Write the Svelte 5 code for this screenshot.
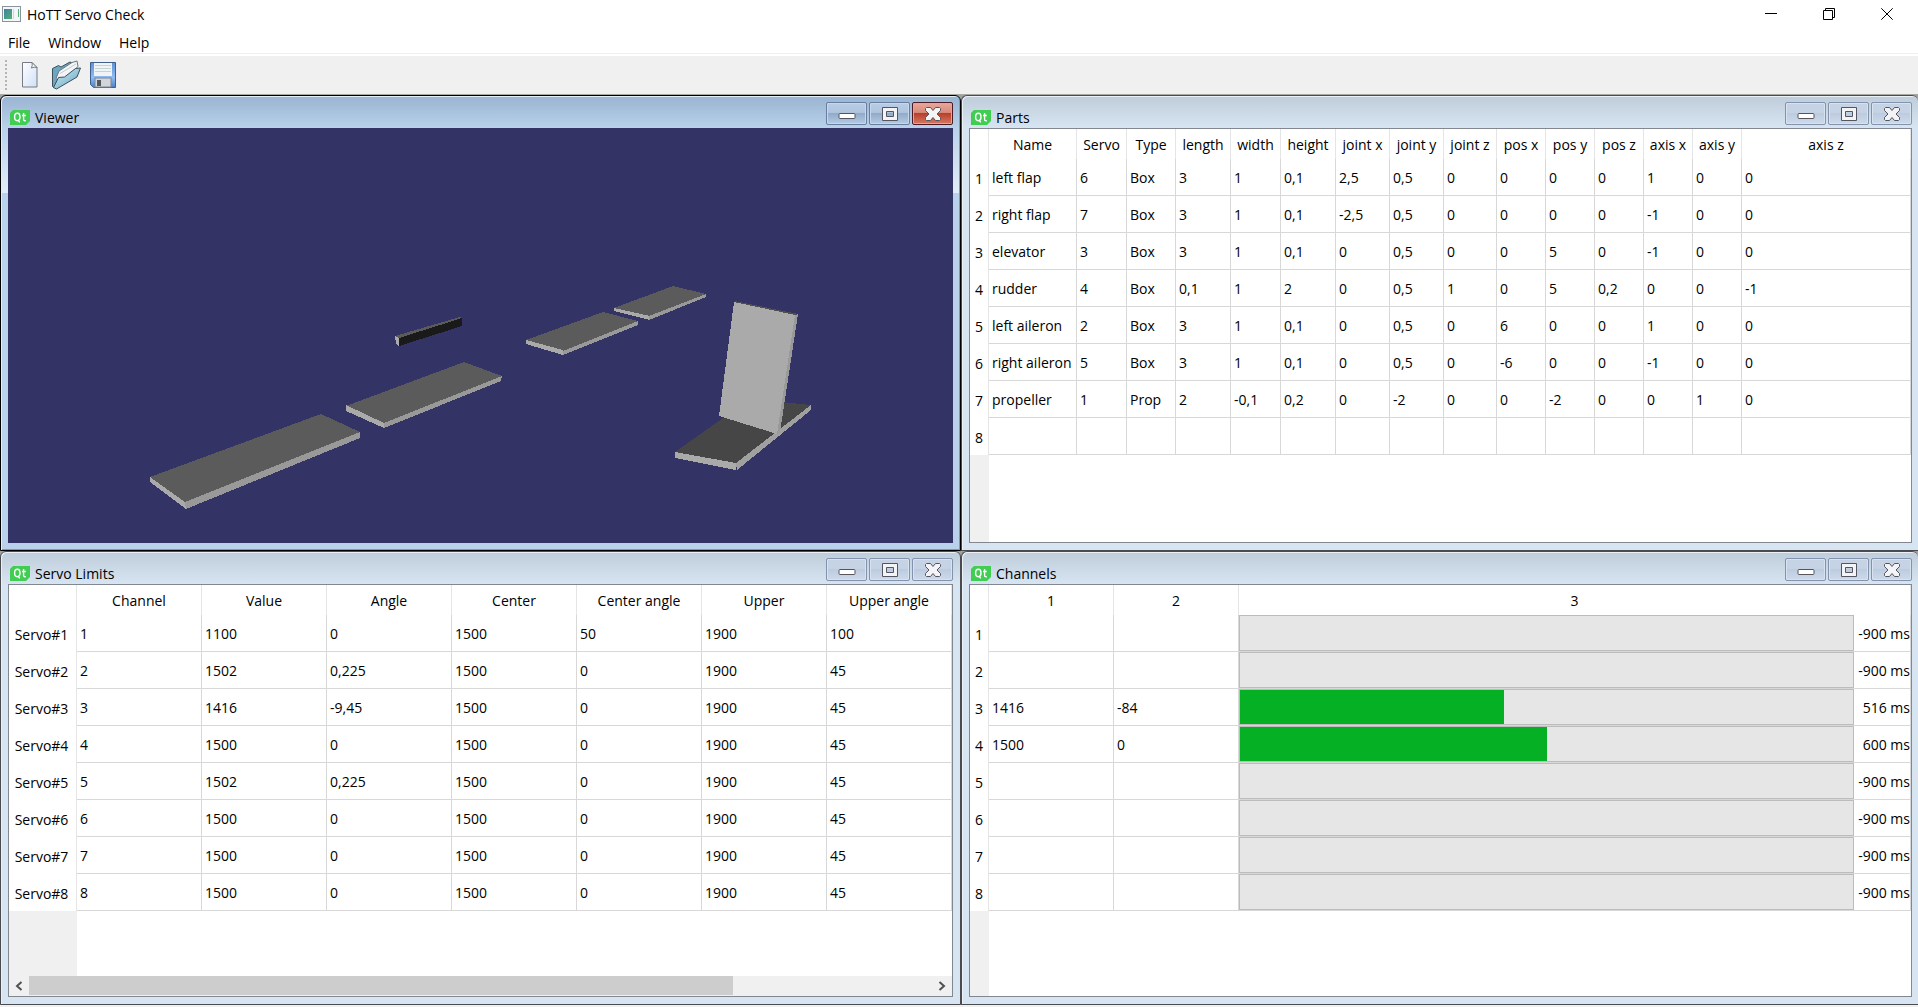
<script>
  const partColumns = [
    ['Name', 88], ['Servo', 50], ['Type', 49], ['length', 55], ['width', 50],
    ['height', 55], ['joint x', 54], ['joint y', 54], ['joint z', 53],
    ['pos x', 49], ['pos y', 49], ['pos z', 49], ['axis x', 49], ['axis y', 49],
    ['axis z', null]
  ];
  const parts = [
    ['left flap', '6', 'Box', '3', '1', '0,1', '2,5', '0,5', '0', '0', '0', '0', '1', '0', '0'],
    ['right flap', '7', 'Box', '3', '1', '0,1', '-2,5', '0,5', '0', '0', '0', '0', '-1', '0', '0'],
    ['elevator', '3', 'Box', '3', '1', '0,1', '0', '0,5', '0', '0', '5', '0', '-1', '0', '0'],
    ['rudder', '4', 'Box', '0,1', '1', '2', '0', '0,5', '1', '0', '5', '0,2', '0', '0', '-1'],
    ['left aileron', '2', 'Box', '3', '1', '0,1', '0', '0,5', '0', '6', '0', '0', '1', '0', '0'],
    ['right aileron', '5', 'Box', '3', '1', '0,1', '0', '0,5', '0', '-6', '0', '0', '-1', '0', '0'],
    ['propeller', '1', 'Prop', '2', '-0,1', '0,2', '0', '-2', '0', '0', '-2', '0', '0', '1', '0'],
    Array(15).fill('')
  ];

  const limitColumns = ['Channel', 'Value', 'Angle', 'Center', 'Center angle', 'Upper', 'Upper angle'];
  const limits = [
    ['1', '1100', '0', '1500', '50', '1900', '100'],
    ['2', '1502', '0,225', '1500', '0', '1900', '45'],
    ['3', '1416', '-9,45', '1500', '0', '1900', '45'],
    ['4', '1500', '0', '1500', '0', '1900', '45'],
    ['5', '1502', '0,225', '1500', '0', '1900', '45'],
    ['6', '1500', '0', '1500', '0', '1900', '45'],
    ['7', '1500', '0', '1500', '0', '1900', '45'],
    ['8', '1500', '0', '1500', '0', '1900', '45']
  ];

  const channels = [
    ['', '', -900], ['', '', -900], ['1416', '-84', 516], ['1500', '0', 600],
    ['', '', -900], ['', '', -900], ['', '', -900], ['', '', -900]
  ];
</script>

{#snippet titlebar(name)}
  <header class="titlebar">
    <h2>
      <svg class="qt" viewBox="0 0 20 15" aria-hidden="true">
        <path d="M3 0H20V11L16 15H0V3Z" fill="#41cd52" />
        <g fill="none" stroke="#fff" stroke-width="1.4">
          <ellipse cx="7.3" cy="7" rx="2.7" ry="3.7" />
          <path d="M8 10l1.8 2.4M13.600 3v6.400q0 1.300 1.300 1.300h.9M12 5.500h3.800" />
        </g>
      </svg>
      <span>{name}</span>
    </h2>
    <div class="winbuttons">
      <button aria-label="Minimize {name}">
        <svg viewBox="0 0 20 16"><rect x="2" y="7.500" width="16" height="5" rx="1" fill="#fff" stroke="#55555f" /></svg>
      </button>
      <button aria-label="Maximize {name}">
        <svg viewBox="0 0 20 16">
          <path fill-rule="evenodd" d="M2.500 1.500h15v13h-15zM6.500 5.500h7v5h-7z" fill="#f4f4f6" stroke="#55555f" />
        </svg>
      </button>
      <button class="close" aria-label="Close {name}">
        <svg viewBox="0 0 20 16">
          <path d="M2.500 2.500l1-1h4L10 4.500l2.500-3h4l1 1v2L14 8l3.500 3.500v2l-1 1h-4L10 11.500l-2.500 3h-4l-1-1v-2L6 8 2.500 4.500z" fill="#f4f4f6" stroke="#55555f" />
        </svg>
      </button>
    </div>
  </header>
{/snippet}

<div class="app">
  <header class="apptitle">
    <svg class="appicon" viewBox="0 0 19 16" aria-hidden="true">
      <defs>
        <linearGradient id="appg" x1="0" y1="0" x2="1" y2="1">
          <stop offset="0" stop-color="#3f7fa8" /><stop offset="1" stop-color="#56b070" />
        </linearGradient>
      </defs>
      <rect x=".5" y=".5" width="18" height="15" fill="#f4f7f9" stroke="#8a949c" />
      <rect x="2" y="3" width="8" height="10" fill="url(#appg)" />
      <path d="M11.500 3v10" stroke="#cfd8de" />
      <rect x="16" y="3" width="1" height="8" fill="#58b07c" />
    </svg>
    <h1>HoTT Servo Check</h1>
    <div class="syscontrols">
      <button aria-label="Minimize"><svg viewBox="0 0 12 12"><path d="M0 5.500h12" /></svg></button>
      <button aria-label="Restore"><svg viewBox="0 0 12 12"><path d="M.5 2.500h9v9h-9zM2.500 2.500v-2h9v9h-2" /></svg></button>
      <button aria-label="Close"><svg viewBox="0 0 12 12"><path d="M.3.3l11.400 11.400M11.700.3L.3 11.700" /></svg></button>
    </div>
  </header>

  <nav class="menubar">
    <button>File</button>
    <button>Window</button>
    <button>Help</button>
  </nav>

  <div class="toolbar" role="toolbar" aria-label="File tools">
    <span class="grip"></span>
    <button aria-label="New">
      <svg viewBox="0 0 30 30">
        <defs>
          <linearGradient id="pg" x1="0" y1="0" x2="1" y2="1">
            <stop offset="0" stop-color="#fff" /><stop offset="1" stop-color="#cfe0f8" />
          </linearGradient>
        </defs>
        <path d="M8.500 2.500h9.500l5 5v19.500h-14.500z" fill="url(#pg)" stroke="#777b85" stroke-linejoin="round" />
        <path d="M18 2.500q.8 3-.6 5.500 2.600-1.400 5.600-.5z" fill="#fff" stroke="#777b85" />
      </svg>
    </button>
    <button aria-label="Open">
      <svg viewBox="0 0 30 30">
        <defs>
          <linearGradient id="fg" x1="0" y1="0" x2="1" y2="1">
            <stop offset="0" stop-color="#d7eef6" /><stop offset="1" stop-color="#5fa3c0" />
          </linearGradient>
        </defs>
        <path d="M1.500 8.500l6-3 2.500 1.500L19 2l3 1.500-17 25-3.500-2z" fill="#6ba7c2" stroke="#3c515c" stroke-linejoin="round" />
        <path d="M5 18.500L8 11 21 2.500l5-1.500 1 5.500L10 23z" fill="#f3f5f7" stroke="#6c777d" stroke-linejoin="round" />
        <path d="M9 13.500L25 4" stroke="#c4ccd0" />
        <path d="M7.500 17.500l6-.5L24.500 8.500l5-.5-3.500 9L5.500 29l-3-1.500z" fill="url(#fg)" stroke="#3c515c" stroke-linejoin="round" />
      </svg>
    </button>
    <button aria-label="Save">
      <svg viewBox="0 0 30 30">
        <defs>
          <linearGradient id="sg" x1="0" y1="0" x2="0" y2="1">
            <stop offset="0" stop-color="#5f91d8" /><stop offset=".6" stop-color="#8fbdf2" /><stop offset="1" stop-color="#4a7fc4" />
          </linearGradient>
        </defs>
        <path d="M2.500 2.500h25v25h-22l-3-3z" fill="url(#sg)" stroke="#3f5f8c" stroke-linejoin="round" />
        <rect x="6" y="3" width="18" height="13" fill="#f1f4f6" />
        <path d="M7 5.500h16M7 8.500h16M7 11.500h16" stroke="#c3d4d2" />
        <rect x="7" y="18" width="16" height="9" fill="#d3d5d8" stroke="#77869a" />
        <rect x="9" y="20" width="4" height="6" fill="#55585c" />
      </svg>
    </button>
  </div>

  <main class="mdi">
    <section class="window active">
      {@render titlebar('Viewer')}
      <div class="scene">
        <svg viewBox="8 128 945 415" preserveAspectRatio="none" role="img" aria-label="Servo model">
          <g fill="#5b5b5b">
            <path d="M150 477L321 414L360 432L185 502z" />
            <path d="M346 406L464 362L502 376L384 423z" />
            <path d="M395 336L460 317L462 319L399 338z" />
            <path d="M526 340L603 312L638 321L563 351z" />
            <path d="M614 308L673 286L706 294L650 316z" />
          </g>
          <g fill="#aaa">
            <path d="M150 477L185 502L186 509L150 482z" />
            <path d="M346 405L384 423V428L346 411z" />
            <path d="M395 336L399 338V346L396 344z" />
            <path d="M526 340L563 350V355L526 344z" />
            <path d="M614 308L650 316V320L614 311z" />
          </g>
          <g fill="#999">
            <path d="M185 502L360 432V438L186 509z" />
            <path d="M384 423L502 376L501 381L384 428z" />
            <path d="M563 351L638 321V325L563 355z" />
            <path d="M649 316L706 294V297L649 320z" />
          </g>
          <path d="M399 338L462 318V326L399 346z" fill="#1a1a1a" />
          <path d="M675 452L750 399L811 405L736 464z" fill="#464646" />
          <path d="M675 452L736 463V470L675 458z" fill="#aaa" />
          <path d="M736 463L811 405V410L737 470z" fill="#a0a0a0" />
          <path d="M734 302L795 315L777 434L719 416z" fill="#aaa" />
          <path d="M795 315L798 314L780 432L777 434z" fill="#999" />
          <path d="M734 302L735 301L798 314L795 315z" fill="#505050" />
        </svg>
      </div>
    </section>

    <section class="window rightmost">
      {@render titlebar('Parts')}
      <div class="frame narrow">
        <table>
          <colgroup>
            <col class="rownum" />
            {#each partColumns as [, width]}
              <col style:width={width ? `${width}px` : 'auto'} />
            {/each}
          </colgroup>
          <thead>
            <tr><td class="corner"></td>{#each partColumns as [label]}<th scope="col">{label}</th>{/each}</tr>
          </thead>
          <tbody>
            {#each parts as row, i}
              <tr><th scope="row">{i + 1}</th>{#each row as cell}<td>{cell}</td>{/each}</tr>
            {/each}
          </tbody>
        </table>
      </div>
    </section>

    <section class="window">
      {@render titlebar('Servo Limits')}
      <div class="frame wide">
        <table>
          <colgroup>
            <col class="servoname" />
            {#each limitColumns as _}<col />{/each}
          </colgroup>
          <thead>
            <tr><td class="corner"></td>{#each limitColumns as label}<th scope="col">{label}</th>{/each}</tr>
          </thead>
          <tbody>
            {#each limits as row, i}
              <tr><th scope="row">Servo#{i + 1}</th>{#each row as cell}<td>{cell}</td>{/each}</tr>
            {/each}
          </tbody>
        </table>
        <div class="scrollbar">
          <button aria-label="Scroll left"><svg viewBox="0 0 8 10"><path d="M6.500 1L2 5l4.500 4" /></svg></button>
          <div class="track"><div class="thumb"></div></div>
          <button aria-label="Scroll right"><svg viewBox="0 0 8 10"><path d="M1.500 1L6 5L1.500 9" /></svg></button>
        </div>
      </div>
    </section>

    <section class="window rightmost">
      {@render titlebar('Channels')}
      <div class="frame narrow">
        <table>
          <colgroup>
            <col class="rownum" /><col class="value" /><col class="value" /><col />
          </colgroup>
          <thead>
            <tr><td class="corner"></td><th scope="col">1</th><th scope="col">2</th><th scope="col">3</th></tr>
          </thead>
          <tbody>
            {#each channels as [value, delta, ms], i}
              <tr>
                <th scope="row">{i + 1}</th>
                <td>{value}</td>
                <td>{delta}</td>
                <td class="barcell">
                  <label class="meter">
                    <progress max="1200" value={Math.max(ms, 0)}></progress>
                    <span>{ms} ms</span>
                  </label>
                </td>
              </tr>
            {/each}
          </tbody>
        </table>
      </div>
    </section>
  </main>
</div>

<style>
  :global(body) { background: #f0f0f0; }
  .app {
    display: flex;
    flex-direction: column;
    min-height: 100vh;
    font: 14px/20px "Open Sans", "Noto Sans", sans-serif;
    color: #000;
  }
  button {
    font: inherit;
    color: inherit;
    background: none;
    border: 0;
    padding: 0;
    margin: 0;
  }
  h1, h2 { font: inherit; margin: 0; }
  svg { display: block; }

  .apptitle {
    display: flex;
    align-items: center;
    height: 28px;
    padding: 0 2px;
    background: #fff;
  }
  .appicon { width: 19px; height: 16px; margin-right: 6px; }
  .apptitle h1 { padding-top: 2px; }
  .syscontrols { display: flex; margin-left: auto; }
  .syscontrols button { width: 58px; height: 28px; display: grid; place-items: center; }
  .syscontrols svg { width: 12px; height: 12px; fill: none; stroke: #000; }

  .menubar {
    display: flex;
    gap: 18px;
    height: 26px;
    padding: 3px 8px 0;
    box-sizing: border-box;
    background: #fff;
    border-bottom: 1px solid #f0f0f0;
  }
  .menubar button { height: 22px; line-height: 24px; }

  .toolbar {
    display: flex;
    align-items: center;
    gap: 7px;
    height: 41px;
    padding: 0 5px;
    box-sizing: border-box;
    background: #f0f0f0;
    border-top: 2px solid #fff;
    border-bottom: 1px solid #a8a8a4;
  }
  .toolbar button { width: 30px; height: 30px; }
  .toolbar svg { width: 30px; height: 30px; }
  .grip {
    width: 2px;
    height: 30px;
    background: repeating-linear-gradient(#b4b4b4 0 2px, transparent 2px 4px);
  }

  .mdi {
    flex: 1;
    display: grid;
    grid-template-columns: minmax(0, 961fr) minmax(0, 957fr);
    grid-template-rows: 456fr 454fr;
    margin-bottom: 2px;
    background: #a0a0a0;
  }
  .window {
    display: flex;
    flex-direction: column;
    min-width: 0;
    padding: 0 7px 7px;
    border: 1px solid #4b4b4f;
    border-radius: 6px 6px 0 0;
    background: linear-gradient(#bfcddb, #d7e4f2 32px) #d7e4f2;
    box-shadow: inset 1px 1px #eaf1f8;
  }
  .rightmost { border-right: 0; padding-right: 6px; }
  .active {
    border-color: #000;
    background:
      linear-gradient(#b9d1ea, #e2edf8) 1px 32px / 6px 65px no-repeat,
      linear-gradient(#b9d1ea, #e2edf8) calc(100% - 1px) 32px / 6px 65px no-repeat,
      linear-gradient(#99b4d1, #b9d1ea 32px) #b9d1ea;
    box-shadow: inset 1px 1px #e4eef8, inset -1px -1px #35b8d6;
  }

  .titlebar { display: flex; height: 32px; padding-top: 6px; box-sizing: border-box; }
  .titlebar h2 { display: flex; align-items: center; gap: 5px; height: 20px; padding: 5px 0 0 2px; }
  .titlebar h2 span { padding-top: 2px; }
  .qt { width: 20px; height: 15px; }
  .winbuttons { display: flex; gap: 2px; height: 23px; margin-left: auto; }
  .winbuttons button {
    display: grid;
    place-items: center;
    width: 41px;
    height: 23px;
    border: 1px solid #8392ad;
    border-radius: 2px;
    background: linear-gradient(#c5d3e4 45%, #bccbdf 50%, #cddaea);
    box-shadow: inset 0 0 0 1px #d7e3f0;
  }
  .winbuttons svg { width: 20px; height: 16px; }
  .active .winbuttons button {
    border-color: #697d9e;
    background: linear-gradient(#b9cde5, #afc5de 45%, #92abc9 50%, #b4cbe5);
    box-shadow: inset 0 0 0 1px #c7d8ea;
  }
  .active .winbuttons .close {
    border-color: #4e1a24;
    background: linear-gradient(#e8a79b, #d98a7c 45%, #b8402a 50%, #d67862);
    box-shadow: inset 0 0 0 1px #e5a499;
  }

  .scene { flex: 1; min-height: 0; display: flex; background: #333366; }
  .scene svg { width: 100%; height: 100%; shape-rendering: crispEdges; }

  .frame {
    flex: 1;
    display: flex;
    flex-direction: column;
    overflow: hidden;
    border: 1px solid #828790;
  }
  .narrow { background: linear-gradient(to right, #f0f0f0 19px, #fff 19px); }
  .wide { background: linear-gradient(to right, #f0f0f0 68px, #fff 68px); }

  table { width: 100%; table-layout: fixed; border-collapse: separate; border-spacing: 0; }
  .rownum { width: 19px; }
  .servoname { width: 68px; }
  .value { width: 125px; }
  th, td {
    height: 37px;
    padding: 2px 0 0 3px;
    box-sizing: border-box;
    overflow: hidden;
    white-space: nowrap;
    text-align: left;
    font-weight: normal;
    background: #fff;
    border-right: 1px solid #d8d8d8;
    border-bottom: 1px solid #d8d8d8;
  }
  thead th, thead td {
    height: 30px;
    padding: 2px 0 0;
    text-align: center;
    border-right-color: #e5e5e5;
    border-bottom: 0;
  }
  tbody th { padding: 2px 0 0; text-align: center; border-right-color: #e5e5e5; border-bottom: 0; }
  .wide tbody th { padding-right: 2px; }

  .barcell { padding: 0; }
  .meter { display: flex; height: 36px; align-items: center; }
  .meter span { width: 56px; padding-top: 2px; text-align: right; }
  progress {
    flex: 1;
    min-width: 0;
    height: 36px;
    box-sizing: border-box;
    appearance: none;
    border: 1px solid #bcbcbc;
    background: #e6e6e6;
  }
  progress::-webkit-progress-bar { background: #e6e6e6; }
  progress::-webkit-progress-value { background: #06b025; }

  .scrollbar { display: flex; height: 20px; margin-top: auto; background: #f0f0f0; }
  .scrollbar button { display: grid; place-items: center; width: 20px; height: 20px; }
  .scrollbar svg { width: 8px; height: 10px; fill: none; stroke: #505050; stroke-width: 2; }
  .track { flex: 1; }
  .thumb { width: 78%; height: 19px; background: #cdcdcd; }
</style>
